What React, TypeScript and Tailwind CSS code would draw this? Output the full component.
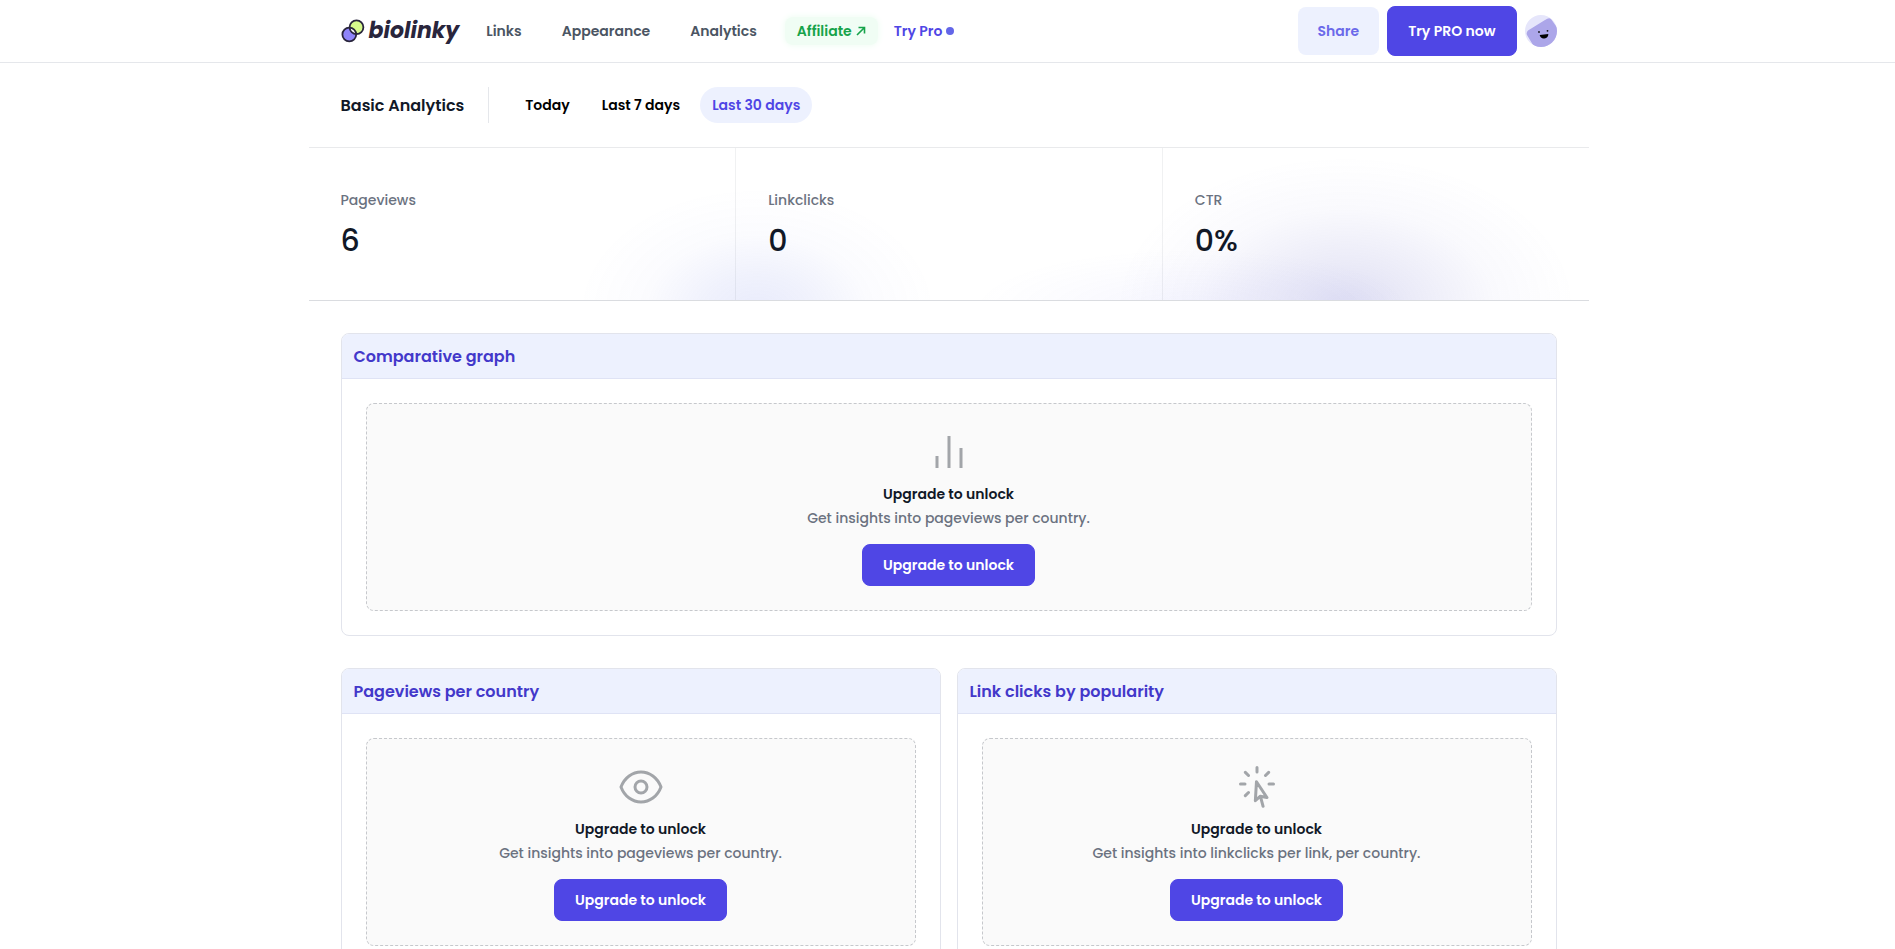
import type { ReactNode } from "react";

function Logo() {
  return (
    <a href="#" className="flex items-center gap-1 text-[#29253c]">
      <svg viewBox="0 0 24 24" className="size-6" fill="none" aria-hidden="true">
        <circle cx="15.500" cy="8.300" r="6.900" fill="#d6f98c" />
        <circle cx="8.300" cy="15.500" r="6.900" fill="#8f84fa" />
        <path d="M8.600 8.600 A6.900 6.900 0 0 1 15.200 15.200 A6.900 6.900 0 0 1 8.600 8.600Z" fill="#fff" />
        <g stroke="#29253c" strokeWidth="1.800">
          <circle cx="15.500" cy="8.300" r="6.900" />
          <circle cx="8.300" cy="15.500" r="6.900" />
        </g>
      </svg>
      <span className="text-[22px] leading-6 font-bold italic">biolinky</span>
    </a>
  );
}

function Avatar() {
  return (
    <button type="button" aria-label="Account" className="size-8 overflow-hidden rounded-full">
      <svg viewBox="0 0 32 32" className="size-8" aria-hidden="true">
        <rect width="32" height="32" fill="#e6e6fb" />
        <path d="M3 15.500 L20 5 Q24 2 26 4 L40 24 L24 40 L8 30 L2 20 Q1 17.500 3 15.500Z" fill="#aca6e9" />
        <circle cx="14" cy="17" r="0.900" fill="#111" />
        <circle cx="22.500" cy="15.800" r="0.900" fill="#111" />
        <path d="M14.700 20 L23.300 19 A4.350 4.350 0 0 1 14.700 20Z" fill="#000" />
      </svg>
    </button>
  );
}

function ArrowUpRight() {
  return (
    <svg viewBox="0 0 10 10" className="size-2.5" fill="none" stroke="currentColor" strokeWidth="1.600" aria-hidden="true">
      <path d="M1 9 L8.500 1.500M2.500 1.500H8.500V7.500" />
    </svg>
  );
}

function BarsIcon() {
  return (
    <svg viewBox="0 0 48 48" className="size-12" stroke="#a2a5a9" strokeWidth="3" aria-hidden="true">
      <path d="M12 40V28M24 40V8M36 40V20" />
    </svg>
  );
}

function EyeIcon() {
  return (
    <svg viewBox="0 0 48 48" className="size-12" stroke="#a2a5a9" strokeWidth="3" fill="none" aria-hidden="true">
      <path d="M4 24C7.500 14.500 15.500 9 24 9S40.500 14.500 44 24C40.500 33.500 32.500 39 24 39S7.500 33.500 4 24Z" strokeLinejoin="round" />
      <circle cx="24" cy="24" r="6" />
    </svg>
  );
}

function ClickIcon() {
  return (
    <svg viewBox="0 0 24 24" className="size-12" stroke="#a2a5a9" strokeWidth="1.500" fill="none" strokeLinecap="round" strokeLinejoin="round" aria-hidden="true">
      <path d="M15.042 21.672 13.684 16.600m0 0-2.510 2.225.569-9.470 5.227 7.917-3.286-.672ZM12 2.250V4.500m5.834.166-1.591 1.591M20.250 10.500H18M7.757 14.743l-1.590 1.590M6 10.500H3.750m4.007-4.243-1.590-1.590" />
    </svg>
  );
}

function Stat({ label, value }: { label: string; value: string }) {
  return (
    <div className="border-l border-gray-500/10 px-8 pt-10 pb-[39px] first:border-l-0">
      <dt className="text-sm leading-6 font-medium text-[#6b7280]">{label}</dt>
      <dd className="mt-[9px] text-3xl leading-10 font-medium text-[#111827]">{value}</dd>
    </div>
  );
}

function LockedCard({ title, text, icon }: { title: string; text: string; icon: ReactNode }) {
  return (
    <section className="overflow-hidden rounded-lg border border-[#e2e4ec]">
      <h2 className="border-b border-[#dfe3f5] bg-[#edf1fe] px-3 pt-[11px] pb-[9px] text-base leading-6 font-semibold text-[#4338ca]">
        {title}
      </h2>
      <div className="p-6">
        <div className="flex flex-col items-center rounded-lg border border-dashed border-[#c6c8cc] bg-[#fafafa] p-6 text-center">
          {icon}
          <h3 className="mt-2 text-sm leading-5 font-semibold text-[#111827]">Upgrade to unlock</h3>
          <p className="mt-1 text-sm leading-5 font-medium text-[#6b7280]">{text}</p>
          <button type="button" className="mt-4 h-[42px] rounded-lg border border-[#4f46e5] bg-[#4f46e5] px-5 text-sm font-semibold text-white">
            Upgrade to unlock
          </button>
        </div>
      </div>
    </section>
  );
}

const tab = "h-9 rounded-full px-3";

export default function App() {
  return (
    <div className="min-h-screen bg-white font-['Poppins','Inter',sans-serif] text-sm">
      <header className="border-b border-gray-200 pl-0.5">
        <div className="mx-auto flex h-[62px] max-w-7xl items-center justify-between px-8">
          <div className="flex items-center">
            <Logo />
            <nav className="ml-[27px] flex items-center font-semibold text-[#4b5563]">
              <div className="flex gap-10">
                <a href="#">Links</a>
                <a href="#">Appearance</a>
                <a href="#">Analytics</a>
              </div>
              <a href="#" className="ml-7 flex items-center gap-1 rounded-lg bg-[#f0fdf4] px-3 py-1 text-[#16a34a] shadow-[0_0_6px_1px_#f0fdf4]">
                Affiliate
                <ArrowUpRight />
              </a>
              <a href="#" className="ml-4 flex items-center gap-1 text-[#4f46e5]">
                Try Pro
                <span className="size-2 rounded-full bg-[#6366e8]" />
              </a>
            </nav>
          </div>
          <div className="flex items-center gap-2 font-semibold">
            <button type="button" className="h-12 rounded-lg bg-[#edf1fe] px-5 text-[#6b69ea]">Share</button>
            <button type="button" className="h-[50px] rounded-lg border border-[#4f46e5] bg-[#4f46e5] px-5 text-white">Try PRO now</button>
            <Avatar />
          </div>
        </div>
      </header>

      <main className="pl-0.5">
        <div className="mx-auto max-w-7xl">
          <div className="flex h-[85px] items-center gap-6 border-b border-gray-500/15 px-8">
            <h1 className="pt-0.5 text-base leading-6 font-semibold text-[#111827]">Basic Analytics</h1>
            <div className="flex gap-2 border-l border-gray-200 pl-6 font-semibold text-black">
              <button type="button" className={tab}>Today</button>
              <button type="button" className={tab}>Last 7 days</button>
              <button type="button" className={`${tab} bg-[#edf1fe] text-[#4f46e5]`}>Last 30 days</button>
            </div>
          </div>

          <dl className="grid grid-cols-3 border-b border-gray-500/25 bg-[radial-gradient(ellipse_180px_125px_at_35%_108%,rgba(79,99,225,0.13),rgba(79,99,225,0.085)_30%,rgba(79,99,225,0.025)_62%,transparent),radial-gradient(ellipse_230px_150px_at_81%_104%,rgba(70,70,190,0.18),rgba(75,75,190,0.11)_30%,rgba(80,80,200,0.03)_65%,transparent),radial-gradient(ellipse_220px_60px_at_69%_106%,rgba(99,102,241,0.06),transparent)]">
            <Stat label="Pageviews" value="6" />
            <Stat label="Linkclicks" value="0" />
            <Stat label="CTR" value="0%" />
          </dl>

          <div className="p-8">
            <LockedCard title="Comparative graph" text="Get insights into pageviews per country." icon={<BarsIcon />} />
            <div className="mt-8 grid grid-cols-2 gap-4">
              <LockedCard title="Pageviews per country" text="Get insights into pageviews per country." icon={<EyeIcon />} />
              <LockedCard title="Link clicks by popularity" text="Get insights into linkclicks per link, per country." icon={<ClickIcon />} />
            </div>
          </div>
        </div>
      </main>
    </div>
  );
}
